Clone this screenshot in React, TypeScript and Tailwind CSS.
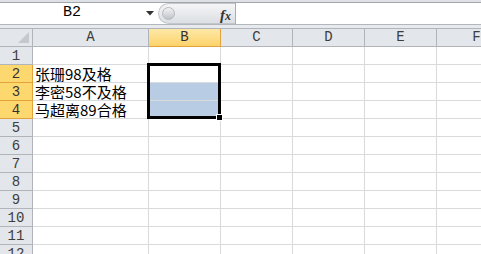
import React from 'react';

const cols = ['A', 'B', 'C', 'D', 'E', 'F'];
const colWidths = ['w-[116px]', 'w-[72px]', 'w-[72px]', 'w-[72px]', 'w-[72px]', 'w-[80px]'];
const rows = [1, 2, 3, 4, 5, 6, 7, 8, 9, 10, 11, 12];

const cellText: Record<number, string> = {
  2: '张珊98及格',
  3: '李密58不及格',
  4: '马超离89合格',
};

const hdrFont = { fontFamily: '"Liberation Mono", "DejaVu Sans Mono", monospace' };
const cellFont = { fontFamily: '"Noto Sans CJK SC", "Noto Sans", sans-serif' };

function FormulaBar() {
  return (
    <div className="flex flex-col">
      <div className="h-[2px] bg-[#dde1e6]" />
      <div className="h-px bg-[#a3a7ac]" />
      <div className="flex h-[21px] bg-white">
        <div className="w-[158px] shrink-0 flex items-center relative">
          <span className="flex-1 text-center text-[15px] text-black pr-[14px]" style={hdrFont}>
            B2
          </span>
          <svg className="absolute left-[146px] top-[8px]" width="8" height="5" viewBox="0 0 8 5">
            <path d="M0 0 H8 L4 4.5 Z" fill="#333" />
          </svg>
        </div>
        <div className="w-[77px] shrink-0 flex items-center rounded-l-[11px] bg-gradient-to-b from-[#f4f5f7] to-[#dcdfe3] border border-[#c3c7cc] border-r-0 relative">
          <div className="ml-[3px] w-[13px] h-[13px] rounded-full bg-gradient-to-b from-[#f3f3f3] to-[#bfc3c8] border border-[#b6babf]" />
          <span
            className="absolute right-[4px] top-[0px] text-[15px] italic font-bold text-[#333]"
            style={{ fontFamily: '"Liberation Serif", serif' }}
          >
            f<span className="text-[12px]">x</span>
          </span>
        </div>
        <div className="w-px shrink-0 bg-[#a9adb2]" />
        <div className="flex-1 bg-white" />
      </div>
      <div className="h-px bg-[#b3b7bc]" />
      <div className="h-[3px] bg-[#e7eaee]" />
    </div>
  );
}

function HeaderRow() {
  return (
    <div className="flex h-[19px] border-t border-[#b1b5ba]">
      <div className="w-[33px] shrink-0 border-r border-b border-[#b1b5ba] bg-[#e3e6ea] relative">
        <svg className="absolute right-[3px] bottom-[3px]" width="11" height="11" viewBox="0 0 11 11">
          <path d="M11 0 V11 H0 Z" fill="#c5c9ce" />
        </svg>
      </div>
      {cols.map((c, i) => {
        const sel = c === 'B';
        return (
          <div
            key={c}
            className={`${colWidths[i]} shrink-0 flex items-center justify-center border-r border-b text-[14px] ${
              sel
                ? 'bg-gradient-to-b from-[#fde8a6] to-[#fdd36a] border-[#e2a33c] text-[#333]'
                : 'bg-[#e3e6ea] border-[#b1b5ba] text-[#3d3d3d]'
            }`}
            style={hdrFont}
          >
            {c}
          </div>
        );
      })}
    </div>
  );
}

function Row({ n }: { n: number }) {
  const sel = n >= 2 && n <= 4;
  return (
    <div className="flex h-[18px]">
      <div
        className={`w-[33px] shrink-0 flex items-center justify-center border-r border-b text-[14px] leading-none ${
          sel
            ? 'bg-[#fdd86e] border-[#e2a33c] text-[#333]'
            : 'bg-[#e3e6ea] border-[#b1b5ba] text-[#3d3d3d]'
        }`}
        style={hdrFont}
      >
        {n}
      </div>
      {cols.map((c, i) => {
        const fill = c === 'B' && (n === 3 || n === 4);
        return (
          <div
            key={c}
            className={`${colWidths[i]} shrink-0 flex items-center border-r border-b border-[#d8dadc] ${
              fill ? 'bg-[#b8cce4]' : 'bg-white'
            }`}
          >
            {c === 'A' && cellText[n] ? (
              <span className="pl-[2px] text-[15px] leading-none text-black whitespace-nowrap" style={cellFont}>
                {cellText[n]}
              </span>
            ) : null}
          </div>
        );
      })}
    </div>
  );
}

export default function App() {
  return (
    <div className="w-[481px] h-[254px] overflow-hidden bg-white relative">
      <FormulaBar />
      <HeaderRow />
      {rows.map((n) => (
        <Row key={n} n={n} />
      ))}
      <div className="absolute left-[147px] top-[63px] w-[74px] h-[56px] border-[3px] border-black pointer-events-none" />
      <div className="absolute left-[216px] top-[114px] w-[7px] h-[7px] bg-black border border-white" />
    </div>
  );
}
